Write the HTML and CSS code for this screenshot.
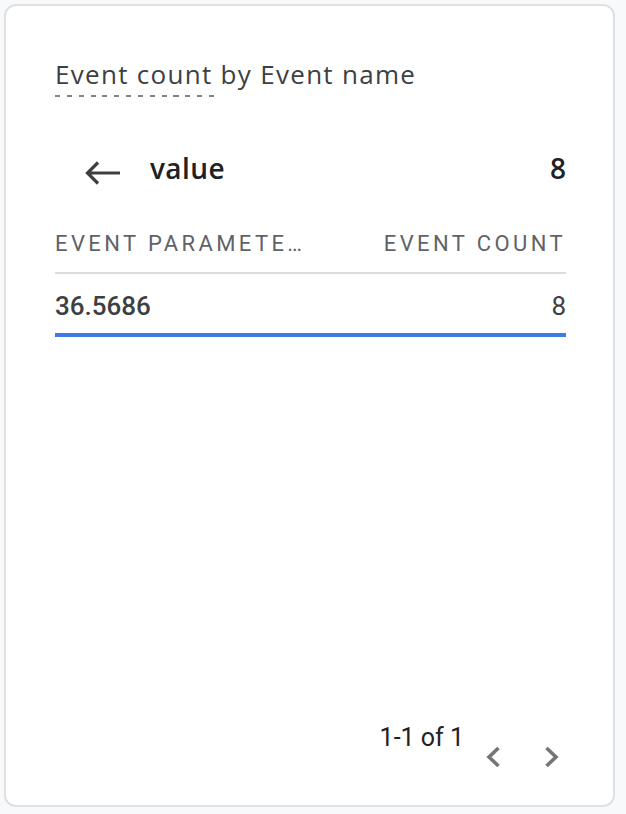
FILE: index.html
```html
<!DOCTYPE html>
<html lang="en">
<head>
<meta charset="utf-8">
<title>Event count by Event name</title>
<link rel="stylesheet" href="styles.css">
</head>
<body>
<div class="card">
  <div class="title">Event count by Event name</div>
  <div class="title-dash"></div>

  <div class="drill">
    <svg class="back" width="36" height="24" viewBox="0 0 36 24" aria-hidden="true">
      <path d="M35 12H3M13 1.5L2.5 12L13 22.5" fill="none" stroke="#3c4043" stroke-width="3.2"/>
    </svg>
    <span class="drill-name">value</span>
    <span class="drill-total">8</span>
  </div>

  <div class="table">
    <div class="thead">
      <span class="th">EVENT PARAMETE…</span>
      <span class="th">EVENT COUNT</span>
    </div>
    <div class="trow">
      <span class="td">36.5686</span>
      <span class="td td-right">8</span>
    </div>
  </div>

  <div class="spacer"></div>

  <div class="pager">
    <span class="pager-text">1-1 of 1</span>
    <svg class="chev chev-left" width="16" height="22" viewBox="0 0 16 22" aria-hidden="true">
      <path d="M13.5 2L4 11L13.5 20" fill="none" stroke="#757575" stroke-width="3.6"/>
    </svg>
    <svg class="chev chev-right" width="16" height="22" viewBox="0 0 16 22" aria-hidden="true">
      <path d="M2.5 2L12 11L2.5 20" fill="none" stroke="#757575" stroke-width="3.6"/>
    </svg>
  </div>
</div>
</body>
</html>
```

FILE: styles.css
```css
html, body {
  margin: 0;
  padding: 0;
  background: #f8f9fa;
}

body {
  padding: 4px 11px 7px 4px;
  font-family: Roboto, "Liberation Sans", sans-serif;
}

.card {
  box-sizing: border-box;
  width: 611px;
  height: 803px;
  background: #ffffff;
  border: 2px solid #dfe0e3;
  border-radius: 12px;
  padding: 52px 47px 37px 49px;
  display: flex;
  flex-direction: column;
}

.title {
  font-family: "Open Sans", Roboto, sans-serif;
  font-size: 26px;
  line-height: 32px;
  letter-spacing: 1.3px;
  color: #3c4043;
  white-space: nowrap;
}

.title-dash {
  margin-top: 5px;
  width: 159px;
  height: 2px;
  background: repeating-linear-gradient(to right, #80868b 0 5px, transparent 5px 11.85px);
}

.drill {
  margin-top: 51px;
  display: flex;
  align-items: flex-start;
  height: 40px;
}

.back {
  margin-left: 30px;
  margin-top: 13px;
  flex: none;
}

.drill-name,
.drill-total {
  font-family: "Open Sans", Roboto, sans-serif;
  font-size: 28px;
  font-weight: 600;
  line-height: 40px;
  color: #202124;
}

.drill-name {
  margin-left: 29px;
  letter-spacing: 0.4px;
}

.drill-total {
  margin-left: auto;
}

.table {
  margin-top: 42px;
}

.thead {
  display: flex;
  justify-content: space-between;
  padding-bottom: 14px;
  border-bottom: 2px solid #dadce0;
}

.th {
  font-size: 22px;
  line-height: 28px;
  letter-spacing: 3.4px;
  color: #5f6368;
  font-weight: 400;
}

.trow {
  display: flex;
  justify-content: space-between;
  padding-top: 16px;
  padding-bottom: 11px;
  border-bottom: 4px solid #3b7be6;
}

.td {
  font-size: 26px;
  line-height: 32px;
  font-weight: 500;
  color: #3c4043;
}

.td-right {
  font-weight: 400;
}

.spacer {
  flex: 1;
}

.pager {
  display: flex;
  justify-content: flex-end;
  align-items: flex-start;
}

.pager-text {
  font-size: 25px;
  line-height: 32px;
  color: #202124;
}

.chev {
  margin-top: 24px;
  flex: none;
}

.chev-left {
  margin-left: 21px;
}

.chev-right {
  margin-left: 43px;
  margin-right: 6px;
}
```
